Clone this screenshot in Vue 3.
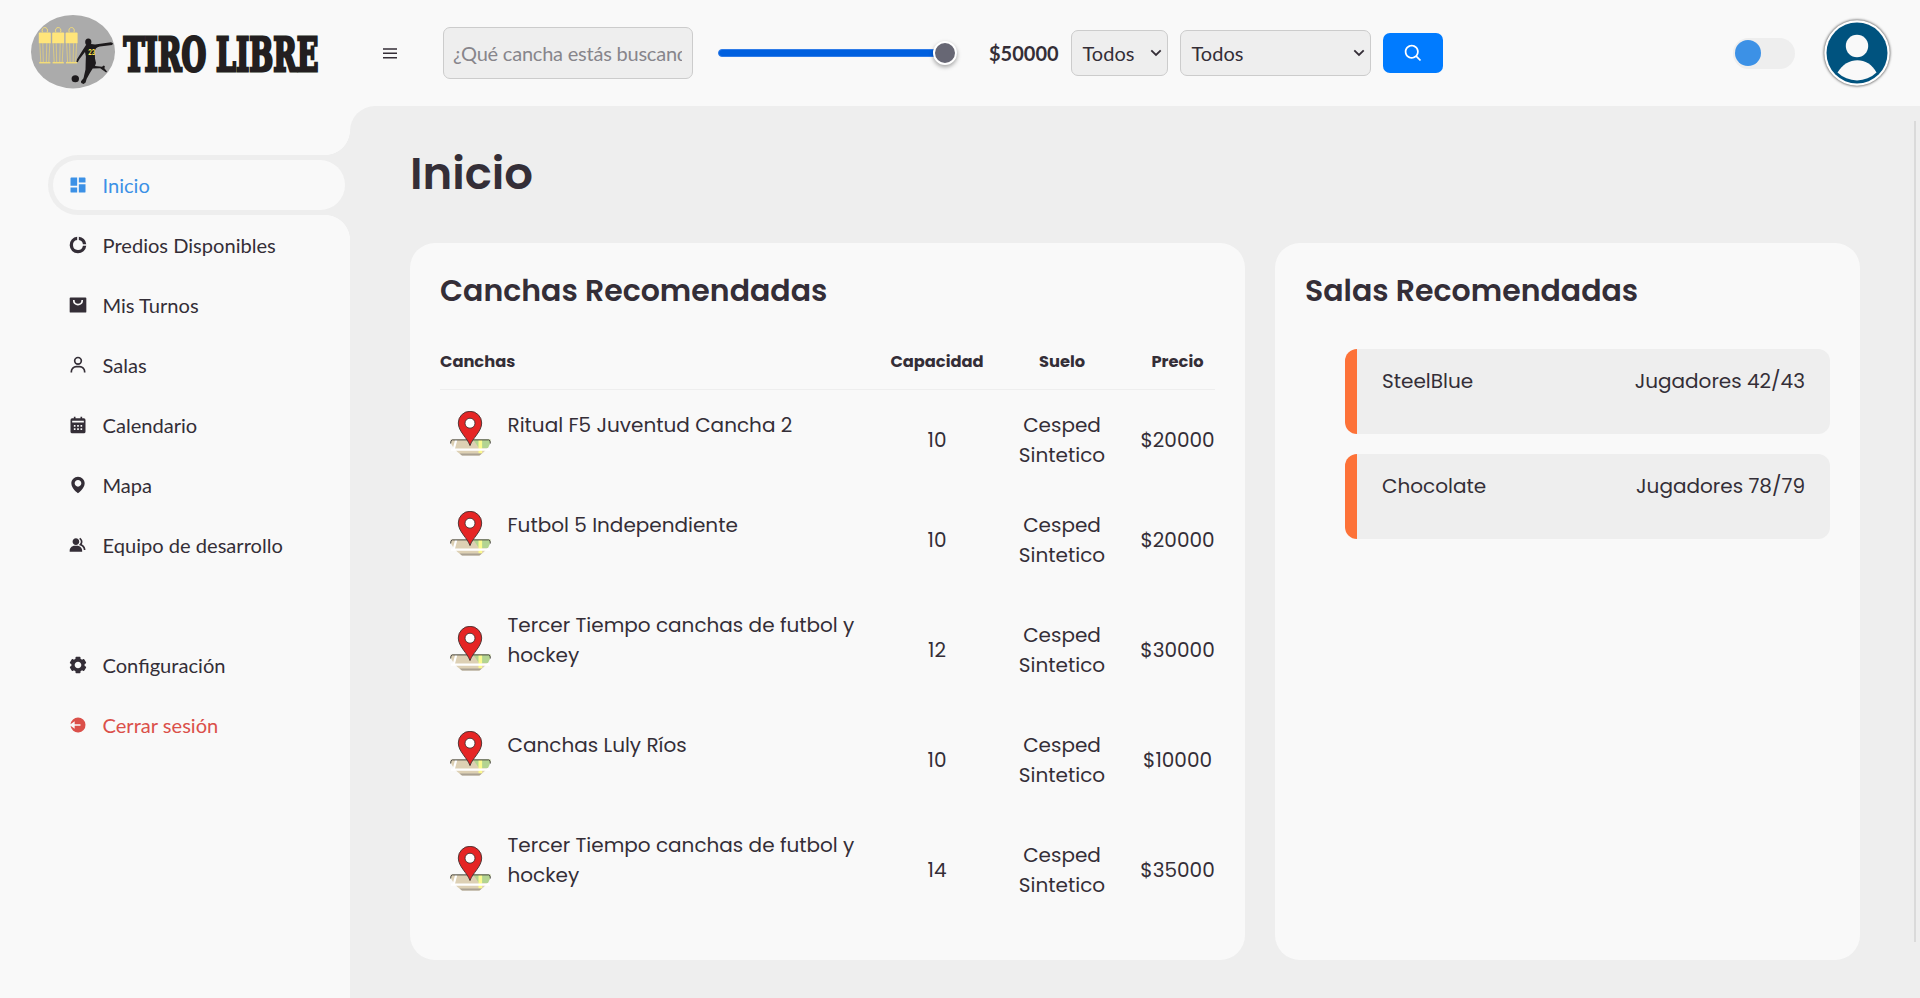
<script setup>
const menu = [
  { label: 'Inicio', icon: 'dashboard', active: true },
  { label: 'Predios Disponibles', icon: 'doughnut' },
  { label: 'Mis Turnos', icon: 'bag' },
  { label: 'Salas', icon: 'user' },
  { label: 'Calendario', icon: 'calendar' },
  { label: 'Mapa', icon: 'map' },
  { label: 'Equipo de desarrollo', icon: 'group' },
]
const bottomMenu = [
  { label: 'Configuración', icon: 'cog' },
  { label: 'Cerrar sesión', icon: 'logout', danger: true },
]
const icons = {
  dashboard: 'M4 3h7v10H3V4a1 1 0 0 1 1-1zM13 3h7a1 1 0 0 1 1 1v5h-8zM3 15h8v6H4a1 1 0 0 1-1-1zM13 11h8v9a1 1 0 0 1-1 1h-7z',
  doughnut: 'M11 2.05V6.09A6 6 0 1 0 17.91 13h4.04A10 10 0 1 1 11 2.05zM13 2.05A10 10 0 0 1 21.95 11h-4.04A6 6 0 0 0 13 6.09z',
  bag: 'M3 3h18a1 1 0 0 1 1 1v16a1 1 0 0 1-1 1H3a1 1 0 0 1-1-1V4a1 1 0 0 1 1-1zM6 6v1c0 3.3 2.7 5.5 6 5.5s6-2.2 6-5.5V6h-2v1c0 2.2-1.8 3.5-4 3.5S8 9.200 8 7V6z',
  user: 'M12 2a5 5 0 1 0 5 5 5 5 0 0 0-5-5zm0 8a3 3 0 1 1 3-3 3 3 0 0 1-3 3zm9 11v-1a7 7 0 0 0-7-7h-4a7 7 0 0 0-7 7v1h2v-1a5 5 0 0 1 5-5h4a5 5 0 0 1 5 5v1z',
  calendar: 'M7 2h2v2h6V2h2v2h2a2 2 0 0 1 2 2v14a2 2 0 0 1-2 2H5a2 2 0 0 1-2-2V6a2 2 0 0 1 2-2h2zM5 7v2h14V7zM7 12v2h2v-2zM11 12v2h2v-2zM15 12v2h2v-2zM7 16v2h2v-2zM11 16v2h2v-2zM15 16v2h2v-2z',
  map: 'M12 2C7.589 2 4 5.589 4 9.995 3.971 16.44 11.696 21.784 12 22c0 0 8.029-5.56 8-12 0-4.411-3.589-8-8-8zm0 12c-2.21 0-4-1.79-4-4s1.79-4 4-4 4 1.79 4 4-1.79 4-4 4z',
  group: 'M9.5 12c2.206 0 4-1.794 4-4s-1.794-4-4-4-4 1.794-4 4 1.794 4 4 4zm1.500 1H8c-3.309 0-6 2.691-6 6v1h15v-1c0-3.309-2.691-6-6-6zM16.604 11.048a5.670 5.670 0 0 0 .751-3.440c-.179-1.784-1.175-3.361-2.803-4.440l-1.105 1.666c1.119.742 1.800 1.799 1.918 2.974a3.693 3.693 0 0 1-1.072 2.986l-1.192 1.192 1.618.475C18.951 13.701 19 17.957 19 18h2c0-1.789-.956-5.285-4.396-6.952z',
  cog: 'm2.344 15.271 2 3.460a1 1 0 0 0 1.366.365l1.396-.806c.580.457 1.221.832 1.895 1.112V21a1 1 0 0 0 1 1h4a1 1 0 0 0 1-1v-1.598a8.094 8.094 0 0 0 1.895-1.112l1.396.806c.477.275 1.091.110 1.366-.365l2-3.460a1.004 1.004 0 0 0-.365-1.366l-1.372-.793a7.683 7.683 0 0 0-.002-2.224l1.372-.793c.476-.275.641-.890.365-1.366l-2-3.460a1 1 0 0 0-1.366-.365l-1.396.806A8.034 8.034 0 0 0 15 4.598V3a1 1 0 0 0-1-1h-4a1 1 0 0 0-1 1v1.598A8.094 8.094 0 0 0 7.105 5.710L5.710 4.904a.999.999 0 0 0-1.366.365l-2 3.460a1.004 1.004 0 0 0 .365 1.366l1.372.793a7.683 7.683 0 0 0 0 2.224l-1.372.793c-.476.275-.641.890-.365 1.366zM12 8c2.206 0 4 1.794 4 4s-1.794 4-4 4-4-1.794-4-4 1.794-4 4-4z',
  logout: 'M12 3a9 9 0 1 1-8.950 10L8 16.500V13h7v-2H8V7.500L3.050 11A9 9 0 0 1 12 3z',
}
const courts = [
  { name: 'Ritual F5 Juventud Cancha 2', cap: 10, price: '$20000' },
  { name: 'Futbol 5 Independiente', cap: 10, price: '$20000' },
  { name: 'Tercer Tiempo canchas de futbol y hockey', cap: 12, price: '$30000' },
  { name: 'Canchas Luly Ríos', cap: 10, price: '$10000' },
  { name: 'Tercer Tiempo canchas de futbol y hockey', cap: 14, price: '$35000' },
]
const rooms = [
  { name: 'SteelBlue', players: 'Jugadores 42/43' },
  { name: 'Chocolate', players: 'Jugadores 78/79' },
]
</script>

<template>
  <div class="app">
    <header class="topbar">
      <svg class="logo" width="300" height="80" viewBox="25 10 300 80">
        <ellipse cx="73" cy="51.700" rx="42" ry="36.700" fill="#ababab" />
        <g v-for="i in 3" :key="i" :transform="`translate(${38.800 + (i - 1) * 13.400} 26)`">
          <path d="M3.600 6.200C1.500 0 10.500 0 8.400 6.200" fill="none" stroke="#f3dc78" stroke-width="1" />
          <path d="M1 6.500h10q1 0 1 1v9.800H0V7.500q0-1 1-1z" fill="#ffe57a" />
          <path d="M1 17l1 19.500M4 17l.5 19.500M8 17l-.5 19.500M11 17l-1 19.500" fill="none" stroke="#e5d07c" stroke-width=".8" />
          <path d="M.4 36.700h11.200" stroke="#f3dc78" stroke-width="1.500" />
        </g>
        <g fill="#1d1a1c">
          <ellipse cx="88.300" cy="41.900" rx="3.100" ry="3.500" />
          <path d="M86 45q4-1.500 9-.5l16-2.200 2 .9-.8 1.700-12.400 1.700q-5 1-5 5.400l.2 6.500 1 4.500-1 3 7 .8 1.700-1.200 1.200.6-.5 2 2.600 3.200-.8 1.200-6-4.300-7.500.2-2.800 4.500-3.300 6-1 3.600-2 1.300-2.400-.8-.2-1.800 2.500-3 2-8.800.2-8 .2-5-.9-4.500-5.500 7-1.800 3.300-1.300-.5.600-2.500 5.300-8.500z" />
          <ellipse cx="75.300" cy="78.700" rx="3.700" ry="3.500" />
        </g>
        <text x="88.200" y="54.500" textLength="7" lengthAdjust="spacingAndGlyphs" class="shirt">23</text>
        <text class="brand" x="123.500" y="71" textLength="195" lengthAdjust="spacingAndGlyphs">TIRO LIBRE</text>
      </svg>
      <svg class="burger" width="14" height="11" viewBox="0 0 14 11"><path d="M0 1h14M0 5.300h14M0 9.700h14" stroke="#342e37" stroke-width="1.500" /></svg>
      <div class="field search"><span>¿Qué cancha estás buscando?</span></div>
      <div class="range"><span class="thumb"></span></div>
      <strong class="amount">$50000</strong>
      <div class="field select small">Todos<svg width="12" height="8" viewBox="0 0 12 8"><path d="M1.300 1.300 6 6l4.700-4.700" /></svg></div>
      <div class="field select large">Todos<svg width="12" height="8" viewBox="0 0 12 8"><path d="M1.300 1.300 6 6l4.700-4.700" /></svg></div>
      <button class="go"><svg width="21" height="21" viewBox="0 0 24 24" fill="#fff"><path d="M10 18a7.952 7.952 0 0 0 4.897-1.688l4.396 4.396 1.414-1.414-4.396-4.396A7.952 7.952 0 0 0 18 10c0-4.411-3.589-8-8-8s-8 3.589-8 8 3.589 8 8 8zm0-14c3.309 0 6 2.691 6 6s-2.691 6-6 6-6-2.691-6-6 2.691-6 6-6z" /></svg></button>
      <div class="toggle"><span></span></div>
      <svg class="avatar" width="76" height="76" viewBox="-38 -38 76 76">
        <circle class="halo" r="32.700" fill="#fff" />
        <circle r="30.500" fill="#00537f" />
        <circle cy="-7" r="11.200" fill="#f9f9f9" />
        <path d="M-19.500 19.500C-10 3 11 3 19.500 19.500A28 28 0 0 1-19.500 19.500z" fill="#f9f9f9" />
      </svg>
    </header>

    <div class="body">
      <nav class="sidebar">
        <ul>
          <li v-for="m in menu" :key="m.label" :class="{ active: m.active }">
            <a><svg width="20" height="20" viewBox="0 0 24 24"><path fill-rule="evenodd" :d="icons[m.icon]" /></svg>{{ m.label }}</a>
          </li>
        </ul>
        <ul class="bottom">
          <li v-for="m in bottomMenu" :key="m.label" :class="{ danger: m.danger }">
            <a><svg width="20" height="20" viewBox="0 0 24 24"><path fill-rule="evenodd" :d="icons[m.icon]" /></svg>{{ m.label }}</a>
          </li>
        </ul>
      </nav>

      <main>
        <h1>Inicio</h1>
        <div class="panels">
          <section class="panel courts">
            <h3>Canchas Recomendadas</h3>
            <div class="row head">
              <span>Canchas</span><span>Capacidad</span><span>Suelo</span><span class="price">Precio</span>
            </div>
            <div v-for="(c, i) in courts" :key="i" class="row">
              <div class="name">
                <svg width="41" height="45" viewBox="0 0 41 45">
                  <path d="M.5 28.500h40q0 8-11 16H12Q.5 36.500.5 28.500z" fill="#ddd0b4" />
                  <path d="M23 28.500h17.500q0 4-2.500 8.500H29z" fill="#b3d491" />
                  <path d="M30.300 29v13.500" stroke="#fbfa8e" stroke-width="3.600" />
                  <path d="M6.200 29 3.800 38M1 38.700h39" stroke="#fff" stroke-width="2.200" />
                  <path d="M9.500 42.500h22.500l-2.700 2H12z" fill="#aaa193" />
                  <path d="M.6 32.500q0-3.600 1.600-3.600h36.600q1.600 0 1.600 3.600" fill="none" stroke="#4b4a42" stroke-width="1" />
                  <path d="M20 34.600C17.500 27 8.300 20.500 8.300 12a11.700 11.700 0 0 1 23.400 0c0 8.500-9.200 15-11.700 22.600z" fill="#e52525" stroke="#43302f" stroke-width=".9" />
                  <circle cx="20" cy="12.200" r="5" fill="#fff" stroke="#43302f" stroke-width=".9" />
                </svg>
                <p>{{ c.name }}</p>
              </div>
              <span>{{ c.cap }}</span>
              <span>Cesped<br />Sintetico</span>
              <span class="price">{{ c.price }}</span>
            </div>
          </section>
          <section class="panel rooms">
            <h3>Salas Recomendadas</h3>
            <ul>
              <li v-for="r in rooms" :key="r.name"><span>{{ r.name }}</span><span>{{ r.players }}</span></li>
            </ul>
          </section>
        </div>
        <div class="scrollbar"></div>
      </main>
    </div>
  </div>
</template>

<style>
html, body { margin: 0; overflow: hidden; background: #f9f9f9; }
</style>

<style scoped>
* { box-sizing: border-box; }
ul { list-style: none; margin: 0; padding: 0; }
.app { width: 1920px; height: 998px; display: flex; flex-direction: column; background: #f9f9f9; color: #342e37; font: 20px/30px Lato, sans-serif; overflow: hidden; }
.topbar { height: 106px; flex: none; display: flex; align-items: center; padding-left: 25px; }
.logo { flex: none; margin-top: -6px; overflow: visible; }
.brand { font-family: "DejaVu Serif", serif; font-weight: 700; font-size: 46px; fill: #231f20; stroke: #231f20; stroke-width: 3px; }
.shirt { font-family: Lato, sans-serif; font-size: 7.500px; font-weight: 900; fill: #ffe94f; }
.burger { margin-left: 58px; flex: none; }
.field { flex: none; background: #eee; border: 1px solid #ccc; border-radius: 7px; white-space: nowrap; }
.search { margin-left: 46px; width: 250px; height: 52px; padding: 10px 10px 0 9px; color: #87858b; letter-spacing: -.220px; }
.search span { display: block; overflow: hidden; }
.range { flex: none; position: relative; margin-left: 25px; width: 239px; height: 8px; border-radius: 4px; background: #0060df; border: 1px solid #2f7ce8; }
.thumb { position: absolute; right: -1px; top: -9px; width: 24px; height: 24px; border-radius: 50%; background: #676774; border: 2px solid #fff; box-shadow: 0 2px 4px rgba(0, 0, 0, .35); }
.amount { width: 71px; margin-left: 32px; flex: none; font-weight: 700; }
.select { height: 46px; display: flex; align-items: center; justify-content: space-between; padding: 0 5px 1px 10.500px; }
.select svg { fill: none; stroke: #342e37; stroke-width: 1.800; }
.small { width: 97px; margin-left: 11px; }
.large { width: 191px; margin-left: 12px; }
.go { flex: none; width: 60px; height: 40px; margin-left: 12px; border: 0; border-radius: 7px; background: #007bff; display: grid; place-items: center; padding: 0; }
.toggle { flex: none; margin-left: 290px; width: 62px; height: 31px; margin-top: 1px; border-radius: 16px; background: #eee; padding: 2px; }
.toggle span { display: block; width: 26px; height: 26px; border-radius: 50%; background: #3c91e6; }
.avatar { flex: none; margin-left: 24px; }
.halo { filter: drop-shadow(0 0 1.500px rgba(0, 0, 0, .85)); }

.body { flex: 1; display: flex; }
.sidebar { width: 350px; flex: none; padding: 49px 0 0 48px; font-size: 20.100px; }
.sidebar li { height: 60px; padding: 5px; position: relative; }
.sidebar li a { display: flex; align-items: center; height: 50px; padding: 0 0 0 14.500px; gap: 15px; border-radius: 25px; }
.sidebar li a svg { fill: currentColor; }
.sidebar .bottom { margin-top: 60px; }
.active { background: #eee; border-radius: 30px 0 0 30px; }
.active a { background: #f9f9f9; color: #3c91e6; }
.active::before, .active::after { content: ""; position: absolute; right: 0; width: 25px; height: 25px; }
.active::before { bottom: 100%; background: radial-gradient(circle at 0 0, #f9f9f9 24.700px, #eee 25.300px); }
.active::after { top: 100%; background: radial-gradient(circle at 0 100%, #f9f9f9 24.700px, #eee 25.300px); }
.danger { color: #db504a; }

main { flex: 1; position: relative; background: #eee; border-radius: 25px 0 0 0; padding: 34px 60px 38px; font-family: Poppins, Inter, sans-serif; }
h1 { margin: 0; height: 103px; font-size: 45px; line-height: 68px; font-weight: 600; }
.panels { display: grid; grid-template-columns: 835px 585px; gap: 30px; height: 717px; }
.panel { background: #f9f9f9; border-radius: 25px; padding: 30px; }
h3 { margin: 0; height: 70px; font-size: 30px; line-height: 36px; font-weight: 600; }
.row { display: grid; grid-template-columns: 435px 124px 126px 90px; align-items: center; text-align: center; padding: 20px 0; }
.head { height: 47px; padding: 0 0 8px; border-bottom: 1px solid #eee; font-size: 16.250px; font-weight: 700; }
.head span:first-child { text-align: left; }
.price { padding-left: 15px; white-space: nowrap; }
.name { align-self: start; display: flex; align-items: center; text-align: left; padding-left: 10px; }
.name svg { flex: none; margin-top: -3px; }
.name p { margin: 0 0 20px 16.500px; width: 360px; }
.rooms ul { padding: 6px 0 0 40px; display: grid; gap: 20px; }
.rooms li { height: 85px; background: #eee; border-left: 12px solid #fd7238; border-radius: 12px; padding: 17px 25px; display: flex; justify-content: space-between; }
.scrollbar { position: absolute; right: 4px; top: 15px; width: 2px; height: 821px; background: #dadada; }
</style>
